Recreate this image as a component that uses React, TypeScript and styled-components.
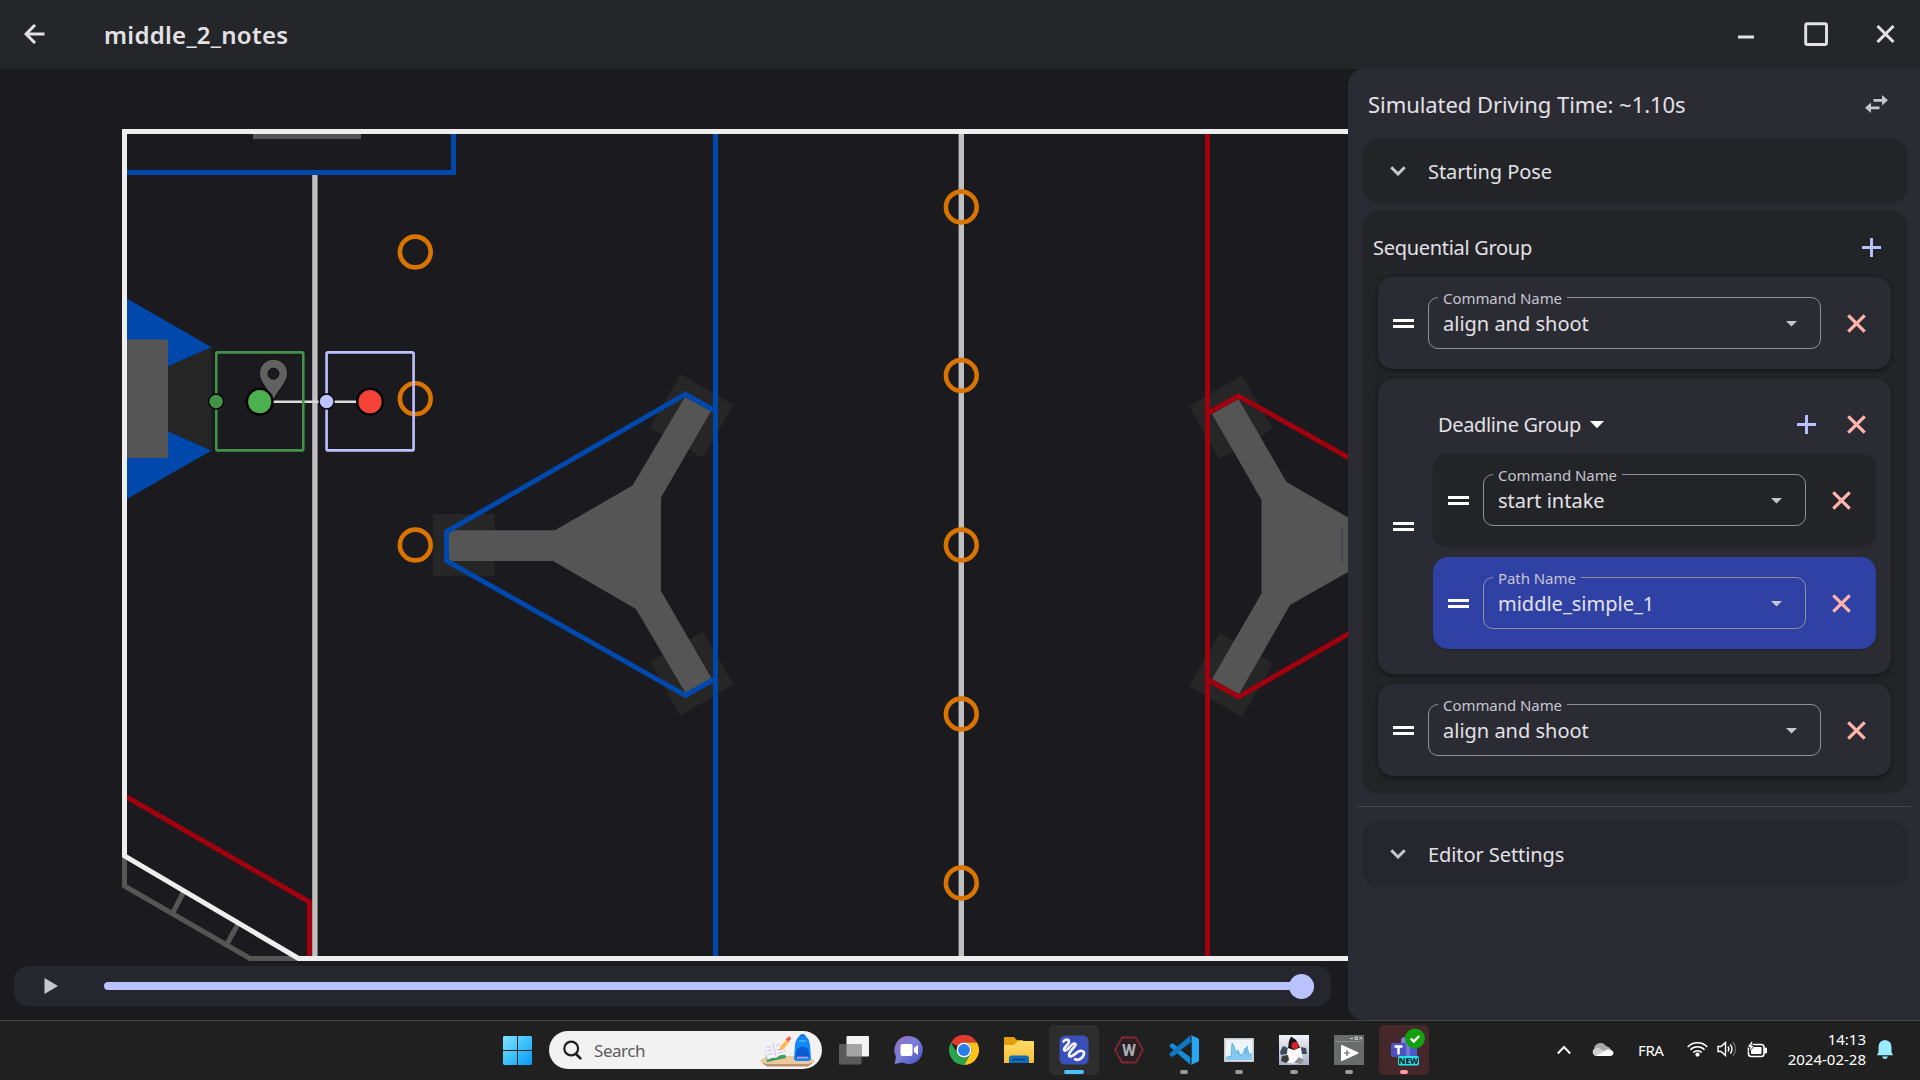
import React from "react";
import styled, { createGlobalStyle } from "styled-components";

const c = {
  bg: "#1b1b1f",
  bar: "#24262a",
  panel: "#2b2b34",
  card: "#232428",
  settings: "#26262f",
  active: "#2f41a5",
  text: "#e4e1e6",
  muted: "#c6c5d0",
  outline: "#90909a",
  primary: "#bac3ff",
  error: "#ffb4ab",
  blue: "#0048ab",
  red: "#a1000f",
  steel: "#555555",
  dim: "#262626",
  orange: "#d97400",
};

const GlobalStyle = createGlobalStyle`
  * { box-sizing: border-box; }
  body { margin: 0; background: ${c.bg}; overflow: hidden; }
`;

const Screen = styled.div`
  width: 1920px;
  height: 1080px;
  display: flex;
  flex-direction: column;
  background: ${c.bg};
  color: ${c.text};
  font-family: "Noto Sans", "Open Sans", sans-serif;
  font-size: 20px;
`;

const TitleBar = styled.header`
  height: 69px;
  flex: none;
  display: flex;
  align-items: center;
  background: ${c.bar};
`;

const BackButton = styled.div`
  width: 69px;
  height: 68px;
  display: grid;
  place-items: center;
  margin: 0 35px 1px 0;
`;

const Title = styled.h1`
  margin: 0;
  flex: 1;
  font-size: 24px;
  font-weight: 600;
  line-height: 32px;
  letter-spacing: 0.28px;
`;

const WindowButton = styled.div`
  width: 70px;
  height: 68px;
  display: grid;
  place-items: center;
`;

const WindowButtons = styled.div`
  display: flex;
  width: 209px;
  margin-bottom: 1px;
`;

const Workspace = styled.main`
  height: 951px;
  flex: none;
  display: flex;
`;

const Stage = styled.section`
  width: 1348px;
  flex: none;
  display: flex;
  flex-direction: column;
`;

const Player = styled.div`
  height: 40px;
  margin: 0 17px 0 14px;
  border-radius: 14px;
  background: ${c.settings};
  display: flex;
  align-items: center;
  padding: 0 17px 0 30px;
`;

const PlayIcon = styled.svg`
  width: 15px;
  height: 18px;
  margin-right: 45px;
`;

const Track = styled.div`
  flex: 1;
  height: 8px;
  border-radius: 4px;
  background: ${c.primary};
  display: flex;
  align-items: center;
  justify-content: flex-end;
`;

const Thumb = styled.div`
  width: 25px;
  height: 25px;
  border-radius: 50%;
  background: ${c.primary};
`;

const Panel = styled.aside`
  flex: 1;
  background: ${c.panel};
  border-radius: 16px 0 0 16px;
  padding: 0 13px 0 15px;
`;

const PanelHeader = styled.div`
  height: 70px;
  padding: 0 19px 0 5px;
  display: flex;
  align-items: center;
  justify-content: space-between;
  font-size: 22px;
  letter-spacing: -0.06px;
`;

const Expander = styled.div<{ $bg: string }>`
  height: 63px;
  border-radius: 15px;
  background: ${(p) => p.$bg};
  box-shadow: 0 1px 2px rgba(0, 0, 0, 0.2);
  display: flex;
  align-items: center;
  padding-left: 27px;
`;

const ExpanderText = styled.span`
  padding: 2px 0 0 22px;
  letter-spacing: -0.08px;
`;

const Group = styled.div`
  height: 581px;
  margin-top: 9px;
  border-radius: 15px;
  background: ${c.card};
  box-shadow: 0 1px 2px rgba(0, 0, 0, 0.2);
  padding: 6px 16px 0 15px;
  display: flex;
  flex-direction: column;
  gap: 10px;
`;

const GroupHeader = styled.div`
  height: 60px;
  margin: 0 -2px -10px -5px;
  padding: 0 12px 0 0;
  display: flex;
  align-items: center;
  justify-content: space-between;
  letter-spacing: -0.3px;
`;

const Card = styled.div<{ $bg?: string }>`
  height: 92px;
  flex: none;
  border-radius: 15px;
  background: ${(p) => p.$bg ?? c.panel};
  box-shadow: 0 2px 5px rgba(0, 0, 0, 0.45);
  display: flex;
  align-items: center;
  padding: 0 25px 0 15px;
`;

const SubCard = styled(Card)`
  box-shadow: 0 1px 2px rgba(0, 0, 0, 0.2);
`;

const NestedCard = styled(Card)`
  height: 295px;
  padding-right: 15px;
`;

const NestedBody = styled.div`
  flex: 1;
  height: 295px;
  margin-left: 19px;
  display: flex;
  flex-direction: column;
  gap: 11px;
`;

const NestedHeader = styled.div`
  height: 90px;
  flex: none;
  margin-bottom: -26px;
  padding: 0 10px 0 5px;
  display: flex;
  align-items: center;
  letter-spacing: -0.35px;
`;

const NestedActions = styled.div`
  display: flex;
  gap: 31px;
  margin-left: auto;
`;

const TypeArrow = styled.svg`
  width: 14px;
  height: 8px;
  margin: 1px 0 0 9px;
`;

const Handle = styled.div`
  width: 21px;
  height: 9px;
  flex: none;
  border: solid #fff;
  border-width: 3px 0;
`;

const Field = styled.div`
  position: relative;
  flex: 1;
  height: 52px;
  margin: 0 26px 0 14px;
  padding: 0 23px 0 14px;
  border: 1px solid ${c.outline};
  border-radius: 10px;
  display: flex;
  align-items: center;
  justify-content: space-between;
`;

const FieldLabel = styled.span<{ $bg: string }>`
  position: absolute;
  left: 9px;
  top: -9px;
  padding: 0 5px;
  background: ${(p) => p.$bg};
  color: ${c.muted};
  font-size: 15px;
  line-height: 18px;
  letter-spacing: -0.06px;
`;

const FieldArrow = styled.svg`
  width: 11px;
  height: 6px;
  margin-top: 1px;
`;

const Divider = styled.hr`
  height: 1px;
  margin: 14px -4px 14px -5px;
  border: 0;
  background: #46464f;
`;

const Settings = styled(Expander)`
  height: 64px;
  margin-top: 14px;
  padding-top: 1px;
`;

const Taskbar = styled.footer`
  height: 60px;
  display: flex;
  align-items: center;
  background: #202020;
  border-top: 1px solid #444446;
  padding-left: 503px;
`;

const SearchBox = styled.div`
  width: 273px;
  height: 38px;
  margin: 0 4px 1px 17px;
  padding: 0 6px 0 14px;
  border-radius: 19px;
  background: #f2f2f2;
  color: #5c5c5c;
  font-size: 17px;
  letter-spacing: -0.45px;
  display: flex;
  align-items: center;
`;

const SearchText = styled.span`
  flex: 1;
  padding-left: 12px;
`;

const Slot = styled.div`
  width: 55px;
  height: 58px;
  margin-bottom: 1px;
  display: grid;
  place-items: center;
`;

const SlotBox = styled.div<{ $bg?: string }>`
  width: 50px;
  height: 50px;
  border-radius: 5px;
  background: ${(p) => p.$bg ?? "transparent"};
  padding-top: 10px;
  display: flex;
  flex-direction: column;
  align-items: center;
  justify-content: space-between;
`;

const Running = styled.i<{ $w: number; $color: string }>`
  width: ${(p) => p.$w}px;
  height: 4px;
  margin-bottom: 1px;
  border-radius: 2px;
  background: ${(p) => p.$color};
`;

const Tray = styled.div`
  margin-left: auto;
  padding: 0 27px 2px 0;
  display: flex;
  align-items: center;
  color: #fff;
  font-size: 15px;
`;

const Language = styled.span`
  width: 26px;
  margin: 0 23px 0 24px;
  letter-spacing: -0.4px;
`;

const TrayIcons = styled.div`
  display: flex;
  gap: 9px;
`;

const Clock = styled.div`
  margin: -2px 11px 0 18px;
  text-align: right;
  line-height: 20px;
  width: 80px;
`;

function Cross({ size = 19, color = c.error, w = 3.3 }: { size?: number; color?: string; w?: number }) {
  return (
    <svg width={size} height={size} viewBox="0 0 19 19" stroke={color} strokeWidth={w}>
      <path d="M1.3 1.3 17.7 17.7M17.7 1.3 1.3 17.7" />
    </svg>
  );
}

function Plus() {
  return (
    <svg width="19" height="19" viewBox="0 0 19 19" stroke={c.primary} strokeWidth="2.9">
      <path d="M9.5 0V19M0 9.5H19" />
    </svg>
  );
}

function Chevron() {
  return (
    <svg width="16" height="10" viewBox="0 0 16 10" fill="none" stroke={c.muted} strokeWidth="3">
      <path d="M1.3 1.3 8 8 14.7 1.3" />
    </svg>
  );
}

function NameField({ label, value, bg }: { label: string; value: string; bg: string }) {
  return (
    <Field>
      <FieldLabel $bg={bg}>{label}</FieldLabel>
      {value}
      <FieldArrow viewBox="0 0 11 6">
        <path d="M0 0H11L5.5 5.6Z" fill={c.muted} />
      </FieldArrow>
    </Field>
  );
}

const notes: [number, number][] = [
  [415.3, 252], [415.3, 398.7], [415.3, 545],
  [961.3, 207], [961.3, 375.5], [961.3, 545], [961.3, 714], [961.3, 883],
];

function FieldMap() {
  return (
    <svg width="1348" height="897" viewBox="0 69 1348 897" fill="none">
      <g fill={c.dim}>
        <path d="M433 514H494.5V576H433Z" />
        <path d="M680.5 374 733.5 404.5 703 458 650 427.5Z" />
        <path d="M703 631.5 733.5 684.5 680.5 715.5 650 662Z" />
        <path d="M1189 406 1242 375.5 1273 429 1219.5 459.5Z" />
        <path d="M1219.5 633 1273 663.5 1242 717 1189 686Z" />
      </g>
      <path d="M127 298.5 211.5 347.3 168 366.5V431L211.5 450.5 127 499Z" fill={c.blue} />
      <path d="M168 366.5 211.5 347.3V450.5L168 431Z" fill={c.dim} />
      <g fill={c.steel}>
        <path d="M127 339.5H168V458H127Z" />
        <path d="M253 134H361V139H253Z" />
        <path d="M449 530.3H555L632.5 485.5 685 397 711 411 661 497.5V591L712 679 685.5 693 636 609 553 561H449Z" />
        <path d="M1212 414 1238.5 399 1286.5 482 1348 517.5V572L1290 605 1239 694 1212 679 1261.5 593.5V500Z" />
      </g>
      <path d="M1342 528V562" stroke="#46464f" strokeWidth="2.2" />
      <path d="M127 172.5H453.5V134" stroke={c.blue} strokeWidth="5" />
      <path d="M314.9 175V956M961.3 134V956" stroke="#bfbfbf" strokeWidth="5.4" />
      <path d="M715.5 134V956" stroke={c.blue} strokeWidth="5" />
      <path d="M714 410.3 685.5 394.2 446.5 531.8V560.8L685.5 695.5 714 679.5" stroke={c.blue} strokeWidth="5" />
      <path d="M1207.5 134V956" stroke={c.red} strokeWidth="5" />
      <path d="M1209 412.5 1238.5 396 1350 458.5M1209 680.5 1238.5 697 1350 633" stroke={c.red} strokeWidth="5" />
      <path d="M125 796 309.5 902V956" stroke={c.red} strokeWidth="5" />
      <path d="M124.5 855V886L250 958.5H300M183.5 892 172.5 913.5M238 924 227 944" stroke={c.steel} strokeWidth="5" />
      <path d="M1348 131.5H124.5V855.8L298.5 958.5H1348" stroke="#eeeeee" strokeWidth="5" />
      {notes.map(([x, y]) => (
        <circle key={`${x}-${y}`} cx={x} cy={y} r="15.4" stroke={c.orange} strokeWidth="4.6" />
      ))}
      <path
        d="M273.5 400C268 389 259.3 382 259.3 373.3A14.2 14.2 0 0 1 287.7 373.3C287.7 382 279 389 273.5 400ZM279 373.7A5.5 5.5 0 1 0 268 373.7 5.5 5.5 0 1 0 279 373.7Z"
        fill="#616161" stroke="#0c0c0c" fillRule="evenodd"
      />
      <path d="M272 401.7H360" stroke="#dcdcdc" strokeWidth="2.6" />
      <rect x="216.3" y="352.4" width="87" height="98" rx="1.5" stroke="#43924a" strokeWidth="2.6" />
      <rect x="326.6" y="352.4" width="87" height="98" rx="1.5" stroke="#bdbfff" strokeWidth="2.6" />
      <g stroke="#000">
        <circle cx="216.1" cy="401.5" r="7.5" fill="#43924a" strokeWidth="1.3" />
        <circle cx="326.6" cy="401.5" r="7.5" fill={c.primary} strokeWidth="1.3" />
        <circle cx="259.7" cy="401.7" r="12.8" fill="#4caf50" strokeWidth="2.4" />
        <circle cx="370" cy="401.7" r="12.8" fill="#f44336" strokeWidth="2.4" />
      </g>
    </svg>
  );
}

const Icon = {
  Start: () => (
    <svg width="29" height="29" viewBox="0 0 29 29">
      <defs>
        <linearGradient id="win" gradientUnits="userSpaceOnUse" x1="0" y1="0" x2="29" y2="29">
          <stop stopColor="#86e0ff" /><stop offset=".5" stopColor="#3cc2fb" /><stop offset="1" stopColor="#0a97f5" />
        </linearGradient>
      </defs>
      <path fill="url(#win)" d="M1 0H14V14H0V1ZM15 0H28L29 1V14H15ZM0 15H14V29H1L0 28ZM15 15H29V28L28 29H15Z" />
    </svg>
  ),
  Search: () => (
    <svg width="19" height="20" viewBox="0 0 19 20" fill="none" stroke="#1f1f1f" strokeWidth="2.2" strokeLinecap="round">
      <circle cx="8.2" cy="8.5" r="6.9" /><path d="M13 14 17.4 18.4" strokeWidth="2.6" />
    </svg>
  ),
  School: () => (
    <svg width="58" height="34" viewBox="0 0 58 34">
      <path d="M1 28 10 23H50L57 28 50 32H9Z" fill="#e9c99d" />
      <path d="M3 29.500 9 31H50L56 29 50 33.500H9Z" fill="#b9906a" />
      <path d="M7 13 9 29 28 25 25 10Z" fill="#3f9a5c" />
      <path d="M6 11.500Q11 9 15 12 20 7 25 9L27.500 22Q22 21 18.500 25 14 24 9.500 27Z" fill="#f4f1fc" />
      <path d="M15 12 18.500 25M8.500 14.500 13 13.500M9.300 18 14 17M10 21.500 15 20.500M18 13 22 11M19 17 24 15.500M20 20.500 25 19" stroke="#cdc3df" strokeWidth="1" />
      <path d="M21 18 22.500 13.500 28 7 31 9.500 25.500 16Z" fill="#ffb84a" />
      <path d="M27.500 6.500 30 4Q31.500 3 32.500 4.500L33 6 30.500 9Z" fill="#f2604c" />
      <path d="M41 5Q44.500 -1 48 5" stroke="#1665d8" strokeWidth="1.800" fill="none" />
      <path d="M37 12Q38 3 44.500 3T52 12L53 25Q53 28 50 28H39Q36 28 36 25Z" fill="#118af7" />
      <path d="M38 19Q39 14 44.500 14T51 19V25H38Z" fill="#0b5bd3" />
      <path d="M39 24.500H50" stroke="#c79bf5" strokeWidth="1.600" />
      <path d="M41 8H48" stroke="#59bdff" strokeWidth="1.300" />
    </svg>
  ),
  TaskView: () => (
    <svg width="30" height="29" viewBox="0 0 30 29">
      <rect x="7.500" width="22.500" height="20.500" rx="1" fill="#f3f3f3" />
      <rect y="8" width="22.500" height="20.500" rx="1" fill="#5a5a5a" />
      <path d="M7.500 8H22.500V20.500H7.500Z" fill="#a3a3a3" />
    </svg>
  ),
  Chat: () => (
    <svg width="30" height="29" viewBox="0 0 30 29">
      <defs>
        <linearGradient id="chat" x2="1" y2="1">
          <stop stopColor="#9a6ab8" /><stop offset=".45" stopColor="#7a7fd8" /><stop offset="1" stopColor="#4a4fc0" />
        </linearGradient>
      </defs>
      <path d="M15 0A14 14 0 1 1 8.500 26.500L.6 28 2 20.500A14 14 0 0 1 15 0Z" fill="url(#chat)" />
      <rect x="6.500" y="8" width="12" height="12" rx="2" fill="#fff" />
      <path d="M20 12 24 9V19L20 16Z" fill="#fff" />
    </svg>
  ),
  Chrome: () => (
    <svg width="30" height="30" viewBox="0 0 48 48">
      <path d="M3.200 12A24 24 0 0 1 44.800 12H24A12 12 0 0 0 13.600 18Z" fill="#e33b2e" />
      <path d="M44.800 12A24 24 0 0 1 24 48L34.400 30A12 12 0 0 0 24 12Z" fill="#fcc419" />
      <path d="M24 48A24 24 0 0 1 3.200 12L13.600 30A12 12 0 0 0 34.400 30Z" fill="#2ba24c" />
      <circle cx="24" cy="24" r="12" fill="#fff" />
      <circle cx="24" cy="24" r="9.600" fill="#2a7de9" />
    </svg>
  ),
  Explorer: () => (
    <svg width="30" height="28" viewBox="0 0 30 28">
      <defs>
        <linearGradient id="fold" x2="0" y2="1"><stop stopColor="#ffdc6e" /><stop offset="1" stopColor="#fcbd2c" /></linearGradient>
      </defs>
      <path d="M0 2Q0 1 1 1H10L13 4H19V9H0Z" fill="#e0a00c" />
      <path d="M0 9H10L14 5H29Q30 5 30 6V26Q30 27 29 27H0Z" fill="url(#fold)" />
      <path d="M5 27V22Q5 19.500 8 19.500H22Q25 19.500 25 22V27Z" fill="#0f6cbd" />
      <path d="M8.500 23.500H21.500" stroke="#0a3f78" strokeWidth="1.500" />
    </svg>
  ),
  PathPlanner: () => (
    <svg width="30" height="30" viewBox="0 0 30 30" fill="none">
      <rect x=".5" y=".5" width="29" height="29" rx="5.500" fill="#3a50b8" />
      <path d="M4.500 6.500C6 3.500 11.500 4 9.500 8 8 11 3.500 14 5.500 15.500 8.500 17 12 8 15.500 8.500 19.500 9.500 10.500 15.500 10 19.500 10 24 15.500 19.500 18 17.500 21 15 25.500 15.500 25 19 24 23.500 18.500 26 16 24.200" stroke="#f3f3fb" strokeWidth="2.700" strokeLinecap="round" strokeLinejoin="round" />
    </svg>
  ),
  Wpi: () => (
    <svg width="30" height="30" viewBox="0 0 30 30">
      <path d="M8 2.500H22L29 15 22 27.500H8L1 15Z" fill="#2a2023" stroke="#b0293c" strokeWidth="1.800" strokeDasharray="1.600 .8" />
      <text x="15" y="20.500" textAnchor="middle" fontSize="16" fontWeight="700" fontFamily="Roboto, sans-serif" fill="#a9aeb6">W</text>
    </svg>
  ),
  Code: () => (
    <svg width="30" height="30" viewBox="0 0 30 30">
      <path d="M22 8V22L3.500 8 .5 10V11.500L21 29.500Z" fill="#168bd6" />
      <path d="M22 8 3.500 22 .5 20V18.500L21 .5Z" fill="#0f76c2" />
      <path d="M21.500 0 29 3.300Q30 3.800 30 5V25Q30 26.200 29 26.700L21.500 30Q22.500 29 22.500 27.500V2.500Q22.500 1 21.500 0Z" fill="#2aa7f2" />
      <path d="M11.500 15 22.500 7V23Z" fill="#202020" />
    </svg>
  ),
  Monitor: () => (
    <svg width="30" height="30" viewBox="0 -3 30 30">
      <rect width="30" height="24" fill="#c3c6ca" /><rect x="1.500" y="1.500" width="27" height="21" fill="#eef5fa" />
      <path d="M2 20 5 18 7 19 8 5 10 8 12 15 14 12 16 17 19 16 21 10 22 16 23 8 25 17 28 15V22H2Z" fill="#86c8ef" />
      <path d="M2 20 5 18 7 19 8 5 10 8 12 15 14 12 16 17 19 16 21 10 22 16 23 8 25 17 28 15" fill="none" stroke="#4aa8df" strokeWidth=".8" />
    </svg>
  ),
  Duke: () => (
    <svg width="30" height="30" viewBox="0 0 30 30">
      <defs>
        <linearGradient id="duke" x2="0" y2="1"><stop stopColor="#f1f3fa" /><stop offset="1" stopColor="#a9afc4" /></linearGradient>
      </defs>
      <rect width="30" height="30" fill="url(#duke)" />
      <path d="M1 17 4 11 9 13 8 19 2 20ZM21 12 27 13 28 19 23 19Z" fill="#3b4a58" />
      <path d="M12 1.500 18 7 22 13 24 26 20 29 9 28 7 25 9 12Z" fill="#f7f7f7" />
      <path d="M12 1.500 17 5 21 12.500 15 15 9 13 10 6Z" fill="#151515" />
      <path d="M3 21 9 20 10 25 7 28 2 26Z" fill="#3a3a40" /><path d="M20 22 25 25 22 29 15 28Z" fill="#8a8a92" />
      <circle cx="16" cy="10.500" r="3.600" fill="#d8222a" />
    </svg>
  ),
  Console: () => (
    <svg width="30" height="30" viewBox="0 0 30 30">
      <rect width="30" height="30" fill="#6a6c6c" /><path d="M1.500 6.500H28.500" stroke="#8b8d8d" />
      <path d="M16 3.500H19M21 2H23.500V4.500H21ZM25.500 2 28 4.500M28 2 25.500 4.500" stroke="#ddd" strokeWidth=".9" fill="none" />
      <path d="M7 10.500Q7 9.500 8 10L24 17.200Q25 18 24 18.800L8 26Q7 26.500 7 25.500Z" fill="#fff" />
      <path d="M13 15V21M10 18H16" stroke="#666" strokeWidth="1.200" />
    </svg>
  ),
  Teams: () => (
    <svg width="36" height="39" viewBox="0 0 36 39">
      <circle cx="15" cy="13" r="4" fill="#7b83eb" />
      <path d="M10 15H26V24Q26 31 18 31T10 24Z" fill="#7078dc" /><path d="M20 15H27V28H20Z" fill="#5059c9" />
      <rect x="1" y="15" width="15" height="14" rx="1.500" fill="#4b53bc" />
      <path d="M4.500 18.400H12.500M8.500 18V26.500" stroke="#fff" strokeWidth="2.500" />
      <circle cx="25" cy="10.500" r="10" fill="#13a10e" />
      <path d="M20.800 10.700 23.800 13.500 29.200 8" stroke="#fff" strokeWidth="2.400" fill="none" />
      <rect x="8" y="28" width="21" height="9.500" rx="2" fill="#1fe5ea" />
      <text x="18.500" y="35.800" textAnchor="middle" fontSize="8.500" fontWeight="800" fontFamily="Noto Sans, sans-serif" fill="#05191c">NEW</text>
    </svg>
  ),
};

const TeamsBox = styled(SlotBox)`
  padding: 3px 0 0 8px;
`;

const TeamsRunning = styled(Running)`
  margin-left: -8px;
`;

const gray = "#9a9a9a";

export default function App() {
  return (
    <Screen>
      <GlobalStyle />
      <TitleBar>
        <BackButton>
          <svg width="21" height="20" viewBox="0 0 21 20" fill="none" stroke={c.text} strokeWidth="3">
            <path d="M20.500 10H2M11 1 2 10 11 19" />
          </svg>
        </BackButton>
        <Title>middle_2_notes</Title>
        <WindowButtons>
          <WindowButton>
            <svg width="16" height="20" viewBox="0 0 16 20"><path d="M0 13H16" stroke={c.text} strokeWidth="3" /></svg>
          </WindowButton>
          <WindowButton>
            <svg width="24" height="24" viewBox="0 0 24 24"><rect x="1.700" y="1.700" width="20.800" height="20.800" rx="1.600" fill="none" stroke={c.text} strokeWidth="2.900" /></svg>
          </WindowButton>
          <WindowButton>
            <svg width="20" height="18" viewBox="0 0 20 18" stroke={c.text} strokeWidth="3">
              <path d="M2.500 1 18.500 17M18.500 1 2.500 17" />
            </svg>
          </WindowButton>
        </WindowButtons>
      </TitleBar>

      <Workspace>
        <Stage>
          <FieldMap />
          <Player>
            <PlayIcon viewBox="0 0 15 18"><path d="M.5 1V17L14 9Z" fill={c.muted} /></PlayIcon>
            <Track><Thumb /></Track>
          </Player>
        </Stage>

        <Panel>
          <PanelHeader>
            <span>Simulated Driving Time: ~1.10s</span>
            <svg width="23" height="19" viewBox="0 0 23 19" fill={c.muted}>
              <path d="M17 0 23 5.300 17 10.600V6.700H8.500V4H17ZM6 7.400 0 12.700 6 18V14.200H14.500V11.500H6Z" />
            </svg>
          </PanelHeader>
          <Expander $bg={c.card}><Chevron /><ExpanderText>Starting Pose</ExpanderText></Expander>
          <Group>
            <GroupHeader><span>Sequential Group</span><Plus /></GroupHeader>
            <Card><Handle /><NameField label="Command Name" value="align and shoot" bg={c.panel} /><Cross /></Card>
            <NestedCard>
              <Handle />
              <NestedBody>
                <NestedHeader>
                  <span>Deadline Group</span>
                  <TypeArrow viewBox="0 0 14 8"><path d="M0 0H14L7 7.300Z" fill="#fff" /></TypeArrow>
                  <NestedActions><Plus /><Cross /></NestedActions>
                </NestedHeader>
                <SubCard $bg={c.card}><Handle /><NameField label="Command Name" value="start intake" bg={c.card} /><Cross /></SubCard>
                <SubCard $bg={c.active}><Handle /><NameField label="Path Name" value="middle_simple_1" bg={c.active} /><Cross /></SubCard>
              </NestedBody>
            </NestedCard>
            <Card><Handle /><NameField label="Command Name" value="align and shoot" bg={c.panel} /><Cross /></Card>
          </Group>
          <Divider />
          <Settings $bg={c.settings}><Chevron /><ExpanderText>Editor Settings</ExpanderText></Settings>
        </Panel>
      </Workspace>

      <Taskbar>
        <Icon.Start />
        <SearchBox><Icon.Search /><SearchText>Search</SearchText><Icon.School /></SearchBox>
        <Slot><Icon.TaskView /></Slot>
        <Slot><Icon.Chat /></Slot>
        <Slot><Icon.Chrome /></Slot>
        <Slot><Icon.Explorer /></Slot>
        <Slot><SlotBox $bg="#2d2d2d"><Icon.PathPlanner /><Running $w={20} $color="#4cc2ff" /></SlotBox></Slot>
        <Slot><Icon.Wpi /></Slot>
        <Slot><SlotBox><Icon.Code /><Running $w={8} $color={gray} /></SlotBox></Slot>
        <Slot><SlotBox><Icon.Monitor /><Running $w={8} $color={gray} /></SlotBox></Slot>
        <Slot><SlotBox><Icon.Duke /><Running $w={8} $color={gray} /></SlotBox></Slot>
        <Slot><SlotBox><Icon.Console /><Running $w={8} $color={gray} /></SlotBox></Slot>
        <Slot><TeamsBox $bg="#47282a"><Icon.Teams /><TeamsRunning $w={8} $color="#ff99a4" /></TeamsBox></Slot>
        <Tray>
          <svg width="14" height="10" viewBox="0 0 14 10" fill="none" stroke="#fff" strokeWidth="1.900"><path d="M.8 8.500 7 2 13.200 8.500" /></svg>
          <svg width="43" height="14" viewBox="-22 0 43 14">
            <path d="M4 13A4 4 0 0 1 1 6 6.500 6.500 0 0 1 13 3Q17 4 18 7L10 13Z" fill="#a9a9a9" />
            <path d="M0 9A4.500 4.500 0 0 1 6 5L15 10 6 13H4Q0 13 0 9Z" fill="#cfcfcf" />
            <path d="M3 13Q8 10 14 6.500 20 6 20.500 10 20 13 17 13Z" fill="#fff" />
          </svg>
          <Language>FRA</Language>
          <TrayIcons>
            <svg width="21" height="16" viewBox="0 0 21 16" fill="none" stroke="#fff" strokeWidth="1.500">
              <path d="M.7 6A13.500 13.500 0 0 1 20.300 6M3.400 8.800A10 10 0 0 1 17.600 8.800M6.200 11.500A6 6 0 0 1 14.800 11.500" />
              <circle cx="10.500" cy="13.600" r="1.400" fill="#fff" />
            </svg>
            <svg width="21" height="16" viewBox="0 0 21 16" fill="none" stroke="#fff" strokeWidth="1.400">
              <path d="M1 5.500H4L8.500 1.500V14.500L4 10.500H1Z" /><path d="M11 5.500Q12.700 8 11 10.500M13.300 3.300Q16.600 8 13.300 12.700" />
              <path d="M16 1Q21 8 16 15" stroke="#666" />
            </svg>
            <svg width="21" height="17" viewBox="0 0 21 17" fill="none" stroke="#fff" strokeWidth="1.600">
              <rect x="1.500" y="3.500" width="15.500" height="12" rx="2.800" /><rect x="4" y="6" width="10.500" height="7" rx=".8" fill="#fff" stroke="none" />
              <path d="M18.300 7.500V11.500H19.200V7.500Z" /><path d="M4.500 0 .3 6.300H3L2 11 7.500 4.600H4.800L6 0Z" fill="#fff" stroke="#202020" strokeWidth=".9" />
            </svg>
          </TrayIcons>
          <Clock>14:13<br />2024-02-28</Clock>
          <svg width="16" height="19" viewBox="0 0 16 19" fill="#99ebff">
            <path d="M8 0Q14.300 .5 14.500 7V12L16 15.300H0L1.500 12V7Q1.700 .5 8 0ZM5 16.500H11Q10 19 8 19T5 16.500Z" />
          </svg>
        </Tray>
      </Taskbar>
    </Screen>
  );
}
